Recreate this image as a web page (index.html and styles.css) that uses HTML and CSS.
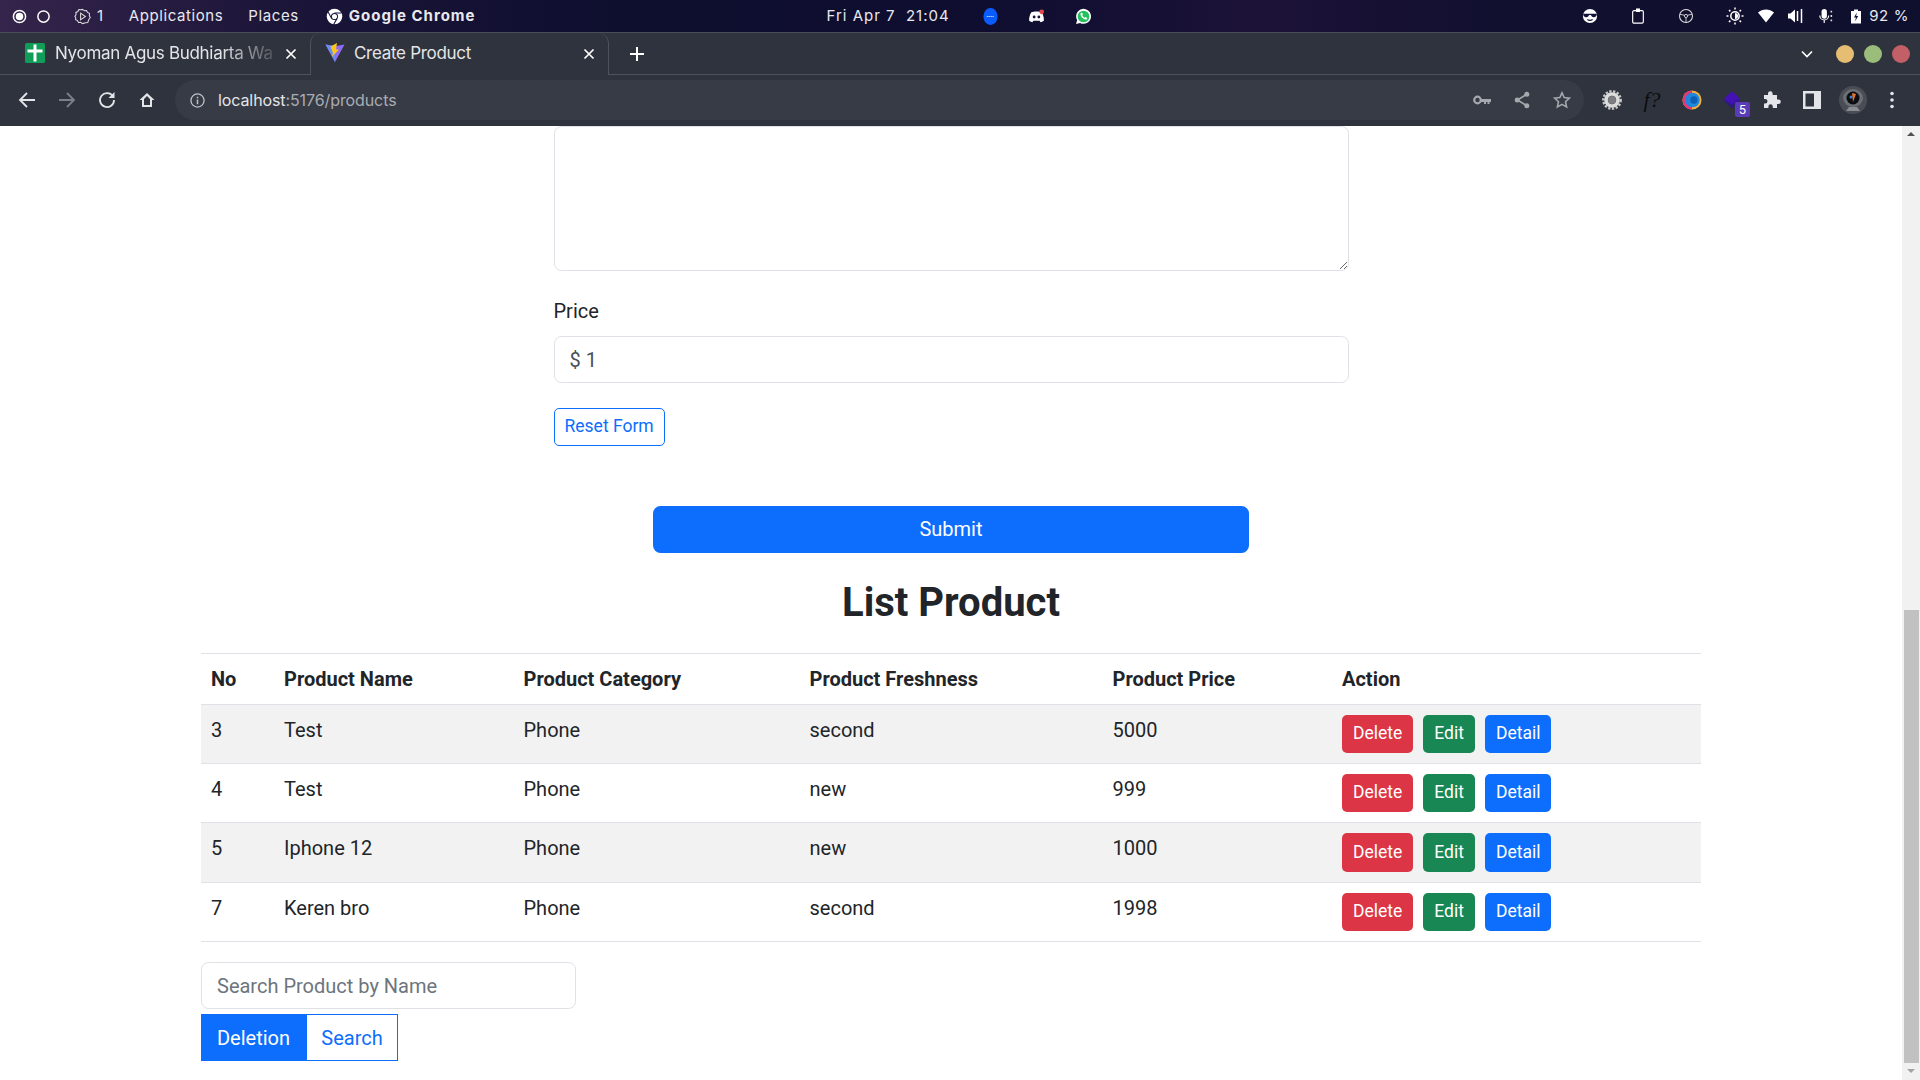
FILE: index.html
```html
<!DOCTYPE html>
<html>

<head>
    <title>Create Product</title>
    <link rel="stylesheet" href="styles.css">
</head>

<body>
    <!-- desktop panel -->
    <div class="panel">
        <svg class="p-dot" viewBox="0 0 16 16"><circle cx="8" cy="8" r="6.5" fill="none" stroke="#fff" stroke-width="1.6"/><circle cx="8" cy="8" r="4" fill="#fff"/></svg>
        <svg class="p-dot ring" viewBox="0 0 16 16"><circle cx="8" cy="8" r="6" fill="none" stroke="#fff" stroke-width="1.6"/></svg>
        <svg class="p-work" viewBox="0 0 18 18"><path d="M9 1.500l2 1.300 2.300-.2 1 2.100 2.100 1-.2 2.300 1 2-1.300 1.800-.6 1.400-.7 2.200-2.300.2L9 16.500l-2-1.300-2.300.2-1-2.100-2-1 .1-2.300L.9 9l1.300-2-.2-2.300 2.100-1 1-2.100 2.300.2z" fill="none" stroke="#ddd" stroke-width="1.100"/><path d="M7 5.500l5 3.500-5 3.500z" fill="none" stroke="#ddd" stroke-width="1.100"/></svg>
        <span class="p-num">1</span>
        <span class="p-menu first">Applications</span>
        <span class="p-menu places">Places</span>
        <svg class="p-chrome" viewBox="0 0 24 24"><circle cx="12" cy="12" r="11" fill="#fff"/><circle cx="12" cy="12" r="5" fill="#14123a"/><circle cx="12" cy="12" r="3.600" fill="#fff"/><path d="M12 7h10M8 15L3 5.500M15.500 15l-5 8.500" stroke="#14123a" stroke-width="1.500" fill="none"/></svg>
        <span class="p-app">Google Chrome</span>
        <span class="p-clock">Fri Apr 7&nbsp;&nbsp;21:04</span>
        <svg class="p-tray zoom" viewBox="0 0 16 18"><ellipse cx="8" cy="9" rx="7.500" ry="9" fill="#0b5cff"/><path d="M4 9h8" stroke="#bcd" stroke-width="1.200" stroke-dasharray="1.500 .5"/></svg>
        <svg class="p-tray discord" viewBox="0 0 18 16"><path d="M3.500 3.500C6 2.300 12 2.300 14.500 3.500 16 6 17 9 16.800 12.500c-1.300 1-2.500 1.300-3.500 1.500l-1-1.500H5.700l-1 1.500c-1-.2-2.200-.5-3.500-1.500C1 9 2 6 3.500 3.500z" fill="#fff"/><circle cx="6.500" cy="8.500" r="1.500" fill="#1a1538"/><circle cx="11.500" cy="8.500" r="1.500" fill="#1a1538"/><circle cx="14.500" cy="3" r="2.500" fill="#e5484d"/></svg>
        <svg class="p-tray whatsapp" viewBox="0 0 16 16"><path d="M1 15l1-3.700A7 7 0 1 1 4.800 14z" fill="#fff"/><circle cx="8" cy="8" r="5.500" fill="#25c15f"/><path d="M5.500 4.800c-1 1.500.5 3.700 1.700 4.700 1.200 1.100 3 2 4 1l.3-1.200-1.700-.9-.8.800c-1-.5-1.700-1.300-2.200-2.300l.7-.8-.8-1.700z" fill="#fff"/></svg>
        <div class="p-right">
            <svg class="p-ic" viewBox="0 0 18 18"><circle cx="9" cy="9" r="8" fill="#fff"/><path d="M1.500 6.500h15v1.500c-.3 1.800-2 2.700-3.500 2.400-1.500-.2-2.500-1-3-2.400H8c-.5 1.400-1.500 2.200-3 2.400-1.500.3-3.200-.6-3.500-2.400z" fill="#14123a"/><path d="M6 13c2 1.200 4 1.200 6 0" stroke="#14123a" stroke-width="1.200" fill="none"/></svg>
            <svg class="p-ic" viewBox="0 0 14 18"><rect x="1" y="3" width="12" height="14" rx="1.500" fill="none" stroke="#fff" stroke-width="1.300"/><rect x="4.800" y=".5" width="4.400" height="4" fill="#fff"/></svg>
            <svg class="p-ic" viewBox="0 0 18 18"><circle cx="9" cy="9" r="7.300" fill="none" stroke="#ddd" stroke-width="1.200"/><circle cx="9" cy="9" r="1.800" fill="none" stroke="#ddd"/><path d="M2 7l5.400 1.200M16 7l-5.400 1.200M9 11v5.500" stroke="#ddd"/></svg>
            <svg class="p-ic sun" viewBox="0 0 18 18"><circle cx="9" cy="9" r="4.200" fill="none" stroke="#fff" stroke-width="1.500"/><path d="M9 6v6a3 3 0 0 0 0-6z" fill="#fff"/><path d="M9 .5v2M9 15.500v2M.5 9h2M15.500 9h2M3 3l1.400 1.400M13.600 13.600L15 15M3 15l1.400-1.400M13.600 4.400L15 3" stroke="#fff" stroke-width="1.500"/></svg>
            <svg class="p-ic wifi" viewBox="0 0 16 14"><path d="M0 3.500C4.500-.5 11.500-.5 16 3.500L8 13.500z" fill="#fff"/></svg>
            <svg class="p-ic vol" viewBox="0 0 16 16"><path d="M0 5.500h2.500L7 1.500v13l-4.500-4H0z" fill="#fff"/><path d="M9.500 3v10M13.500 1v14" stroke="#fff" stroke-width="1.500"/></svg>
            <svg class="p-ic mic" viewBox="0 0 16 18"><rect x="3" y="1" width="6" height="11" rx="3" fill="#fff"/><path d="M1 8.500a5 5 0 0 0 10 0M6 13.500V17" stroke="#fff" stroke-width="1.300" fill="none"/><path d="M14 3v2M14 8v2M14 13v2" stroke="#ddd" stroke-width="1.800"/></svg>
            <svg class="p-ic batt" viewBox="0 0 10 14"><path d="M3 0h4v1.500h3V14H0V1.500h3z" fill="#fff"/><path d="M5.800 3L3 8h2l-1 4 3.200-5.500h-2z" fill="#14123a"/></svg>
            <span class="p-batt">92 %</span>
        </div>
    </div>

    <!-- chrome tab strip -->
    <div class="tabs">
        <div class="tab">
            <svg class="favicon" viewBox="0 0 20 20"><rect width="20" height="20" rx="1.500" fill="#0f9d58"/><path d="M8.500 1.500h3v5h6v3h-6v9h-3v-9h-6v-3h6z" fill="#fff"/></svg>
            <span class="tab-title fade">Nyoman Agus Budhiarta Wa</span>
            <svg class="tab-x" viewBox="0 0 12 12"><path d="M1.500 1.500l9 9M10.500 1.500l-9 9" stroke="#fff" stroke-width="1.700"/></svg>
        </div>
        <div class="tab active">
            <svg class="favicon" viewBox="0 0 20 20"><path d="M.5 1.500L10 3.200 19.500 1.500 10 19z" fill="#8f6cf6"/><path d="M.5 1.500L10 3.200 10 19z" fill="#6a8cf5"/><path d="M12 0L5.500 3.500 8 10 6.800 14 14 6.500 11 6.500z" fill="#ffc517"/></svg>
            <span class="tab-title">Create Product</span>
            <svg class="tab-x" viewBox="0 0 12 12"><path d="M1.500 1.500l9 9M10.500 1.500l-9 9" stroke="#fff" stroke-width="1.700"/></svg>
        </div>
        <svg class="tab-new" viewBox="0 0 16 16"><path d="M8 1v14M1 8h14" stroke="#fff" stroke-width="2"/></svg>
        <div class="tabs-right">
            <svg class="tab-list" viewBox="0 0 12 8"><path d="M1 1.500l5 5 5-5" fill="none" stroke="#fff" stroke-width="1.600"/></svg>
            <span class="win yellow"></span>
            <span class="win green"></span>
            <span class="win red"></span>
        </div>
    </div>

    <!-- chrome toolbar -->
    <div class="toolbar">
        <svg class="nav" viewBox="0 0 18 18"><path d="M17 9H2M9 2L2 9l7 7" fill="none" stroke="#e3e5e8" stroke-width="1.800"/></svg>
        <svg class="nav" viewBox="0 0 18 18"><path d="M1 9h15M9 2l7 7-7 7" fill="none" stroke="#7b7f87" stroke-width="1.800"/></svg>
        <svg class="nav" viewBox="0 0 18 18"><path d="M15 5.500A7 7 0 1 0 16 9" fill="none" stroke="#e3e5e8" stroke-width="1.800"/><path d="M16.500 1v6h-6z" fill="#e3e5e8"/></svg>
        <svg class="nav" viewBox="0 0 18 18"><path d="M9 2L1.500 9H4v7h10V9h2.500zM6 14V8l3-3 3 3v6z" fill="#e3e5e8"/></svg>
        <div class="omnibox">
            <svg class="ob-info" viewBox="0 0 16 16"><circle cx="8" cy="8" r="7" fill="none" stroke="#bfc2c7" stroke-width="1.400"/><path d="M8 7v5M8 4v1.600" stroke="#bfc2c7" stroke-width="1.600"/></svg>
            <span class="url">localhost<span class="url-rest">:5176/products</span></span>
            <svg class="ob-ic" viewBox="0 0 18 12"><circle cx="4.500" cy="6" r="3.300" fill="none" stroke="#a5a8ad" stroke-width="2.200"/><path d="M8 5h10v3h-1.500v2h-2V8h-1.500v2h-2V8H8z" fill="#a5a8ad"/></svg>
            <svg class="ob-ic" viewBox="0 0 16 18"><path d="M12.500 3.500L3.500 9l9 5.500" fill="none" stroke="#a5a8ad" stroke-width="1.600"/><circle cx="12.800" cy="3.300" r="2.500" fill="#a5a8ad"/><circle cx="3.200" cy="9" r="2.500" fill="#a5a8ad"/><circle cx="12.800" cy="14.700" r="2.500" fill="#a5a8ad"/></svg>
            <svg class="ob-ic" viewBox="0 0 18 18"><path d="M9 1.800l2.200 4.800 5.200.6-3.900 3.500 1.100 5.200L9 13.300l-4.600 2.600 1.100-5.200L1.600 7.200l5.200-.6z" fill="none" stroke="#a5a8ad" stroke-width="1.600"/></svg>
        </div>
        <svg class="ext gear" viewBox="0 0 20 20"><circle cx="10" cy="10" r="8.700" fill="none" stroke="#c9c9c9" stroke-width="2.400" stroke-dasharray="2.300 1.500"/><circle cx="10" cy="10" r="6" fill="none" stroke="#dcdcdc" stroke-width="3.600"/><circle cx="10" cy="10" r="4" fill="#7c7e82"/></svg>
        <span class="ext ffq">f?</span>
        <svg class="ext" viewBox="0 0 22 22"><circle cx="11" cy="11" r="10.500" fill="#f0b23c"/><path d="M11 .5a10.500 10.500 0 0 0 0 21z" fill="#e5357b"/><circle cx="11.500" cy="11" r="8" fill="#1f87dc"/><circle cx="13" cy="11" r="4" fill="#0e5fb6"/></svg>
        <div class="ext stack">
            <svg viewBox="0 0 22 22"><path d="M2 12l9-5 9 5-9 8z" fill="#2c1b7e"/><path d="M11 1l9 9-9 6-9-6z" fill="#4212b4"/></svg>
            <span class="badge">5</span>
        </div>
        <svg class="ext" viewBox="0 0 20 20"><path d="M2 5h4V3.500a2.300 2.300 0 0 1 4.600 0V5h4.400v4.400h1.500a2.300 2.300 0 0 1 0 4.600H15v4H10.800v-1.500a2.200 2.200 0 0 0-4.400 0V18H2v-4.500h1.200a2.300 2.300 0 0 0 0-4.600H2z" fill="#e3e5e8"/></svg>
        <svg class="ext" viewBox="0 0 20 20"><path d="M1 1h18v18H1zM3.500 3.500v13H12v-13z" fill="#e3e5e8" fill-rule="evenodd"/></svg>
        <svg class="ext avatar" viewBox="0 0 28 28"><circle cx="14" cy="14" r="14" fill="#4a4d54"/><ellipse cx="14" cy="12" rx="10" ry="9" fill="#6c6f76"/><ellipse cx="14" cy="12" rx="6.500" ry="6.500" fill="#0c0d12"/><path d="M13 7l4 1-3 8z" fill="#e2762c"/><circle cx="12" cy="11" r="1.500" fill="#3f7fd0"/><path d="M7 25l3-4h8l3 4z" fill="#8a8d94"/></svg>
        <svg class="ext kebab" viewBox="0 0 4 18"><circle cx="2" cy="2.500" r="1.800" fill="#e3e5e8"/><circle cx="2" cy="9" r="1.800" fill="#e3e5e8"/><circle cx="2" cy="15.500" r="1.800" fill="#e3e5e8"/></svg>
    </div>

    <div class="viewport">
        <div class="page">
            <div class="form">
                <textarea class="control area"></textarea>
                <label class="label">Price</label>
                <input class="control" value="$ 1">
                <button class="btn small outline reset">Reset Form</button>
            </div>
            <button class="btn primary submit">Submit</button>
            <h2 class="heading">List Product</h2>
            <table class="products">
                <colgroup>
                    <col class="c-no">
                    <col class="c-name">
                    <col class="c-cat">
                    <col class="c-fresh">
                    <col class="c-price">
                    <col class="c-action">
                </colgroup>
                <thead>
                    <tr>
                        <th>No</th>
                        <th>Product Name</th>
                        <th>Product Category</th>
                        <th>Product Freshness</th>
                        <th>Product Price</th>
                        <th>Action</th>
                    </tr>
                </thead>
                <tbody>
                    <tr>
                        <td>3</td>
                        <td>Test</td>
                        <td>Phone</td>
                        <td>second</td>
                        <td>5000</td>
                        <td>
                            <div class="actions">
                                <button class="btn small danger">Delete</button>
                                <button class="btn small success">Edit</button>
                                <button class="btn small primary">Detail</button>
                            </div>
                        </td>
                    </tr>
                    <tr>
                        <td>4</td>
                        <td>Test</td>
                        <td>Phone</td>
                        <td>new</td>
                        <td>999</td>
                        <td>
                            <div class="actions">
                                <button class="btn small danger">Delete</button>
                                <button class="btn small success">Edit</button>
                                <button class="btn small primary">Detail</button>
                            </div>
                        </td>
                    </tr>
                    <tr>
                        <td>5</td>
                        <td>Iphone 12</td>
                        <td>Phone</td>
                        <td>new</td>
                        <td>1000</td>
                        <td>
                            <div class="actions">
                                <button class="btn small danger">Delete</button>
                                <button class="btn small success">Edit</button>
                                <button class="btn small primary">Detail</button>
                            </div>
                        </td>
                    </tr>
                    <tr>
                        <td>7</td>
                        <td>Keren bro</td>
                        <td>Phone</td>
                        <td>second</td>
                        <td>1998</td>
                        <td>
                            <div class="actions">
                                <button class="btn small danger">Delete</button>
                                <button class="btn small success">Edit</button>
                                <button class="btn small primary">Detail</button>
                            </div>
                        </td>
                    </tr>
                </tbody>
            </table>
            <input class="control search" placeholder="Search Product by Name">
            <div class="switch">
                <button class="sw-btn on">Deletion</button>
                <button class="sw-btn">Search</button>
            </div>
        </div>
        <div class="scrollbar">
            <span class="arrow up"></span>
            <div class="thumb"></div>
            <span class="arrow down"></span>
        </div>
    </div>
</body>

</html>
```

FILE: styles.css
```css
* {
    box-sizing: border-box;
}

html,
body {
    margin: 0;
    height: 100%;
    overflow: hidden;
}

body {
    display: flex;
    flex-direction: column;
    font-family: Roboto, "Liberation Sans", sans-serif;
    font-size: 20px;
    line-height: 1.5;
    color: #212529;
    background: #fff;
}

svg {
    display: block;
    flex: none;
}

/* desktop panel */
.panel {
    display: flex;
    align-items: center;
    height: 32px;
    flex: none;
    padding-left: 12px;
    color: #e8e8ee;
    font-family: Inter, Roboto, sans-serif;
    font-size: 15px;
    letter-spacing: .6px;
    background: linear-gradient(90deg, #35244b 0, #1c1639 14%, #0e0e2f 32%, #0f0e30 52%, #1c1238 66%, #11102f 78%, #0f0f2e 100%);
}

.p-dot {
    width: 15px;
    height: 15px;
}

.p-dot.ring {
    margin-left: 9px;
}

.p-work {
    width: 17px;
    height: 17px;
    margin-left: 23px;
}

.p-num {
    margin-left: 6px;
}

.p-menu.first {
    margin-left: 25px;
}

.p-menu.places {
    margin-left: 25px;
}

.p-chrome {
    width: 17px;
    height: 17px;
    margin-left: 27px;
}

.p-app {
    margin-left: 6px;
    font-weight: 700;
    letter-spacing: 1px;
}

.p-clock {
    margin-left: 351px;
    letter-spacing: 1px;
    white-space: pre;
}

.p-tray {
    height: 17px;
    width: 17px;
}

.p-tray.zoom {
    margin-left: 32px;
}

.p-tray.discord {
    margin-left: 29px;
}

.p-tray.whatsapp {
    margin-left: 30px;
}

.p-right {
    display: flex;
    align-items: center;
    margin-left: auto;
    padding-right: 11px;
}

.p-ic {
    height: 16px;
    width: 16px;
    margin-right: 32px;
}

.p-ic.sun {
    height: 18px;
    width: 18px;
    margin-right: 14px;
}

.p-ic.wifi {
    margin-right: 14px;
}

.p-ic.vol {
    margin-right: 14px;
}

.p-ic.mic {
    margin-right: 17px;
}

.p-ic.batt {
    width: 10px;
    height: 15px;
    margin-right: 8px;
}

/* tab strip */
.tabs {
    display: flex;
    height: 43px;
    flex: none;
    padding-left: 6px;
    background: #2f333d;
    border-top: 1px solid #4a4d55;
    border-bottom: 1px solid #4f5259;
    color: #e4e5e8;
    font-family: Inter, Roboto, sans-serif;
    font-size: 17px;
    letter-spacing: -.3px;
}

.tab {
    display: flex;
    align-items: center;
    width: 304px;
    padding: 0 13px 0 19px;
}

.tab.active {
    width: 299px;
    margin-bottom: -1px;
    padding: 0 13px 0 14px;
    background: #2f333d;
    border: 1px solid #4f5259;
    border-bottom: 0;
    border-top: 0;
    border-radius: 10px 10px 0 0;
}

.favicon {
    width: 20px;
    height: 20px;
    margin-bottom: 2px;
}

.tab-title {
    flex: 1;
    margin-left: 10px;
    overflow: hidden;
    white-space: nowrap;
}

.tab.active .tab-title {
    margin-left: 9px;
}

.tab-title.fade {
    -webkit-mask-image: linear-gradient(90deg, #000 72%, transparent 100%);
    mask-image: linear-gradient(90deg, #000 72%, transparent 100%);
}

.tab-x {
    width: 12px;
    height: 12px;
}

.tab-new {
    width: 16px;
    height: 16px;
    align-self: center;
    margin-left: 20px;
}

.tabs-right {
    display: flex;
    align-items: center;
    gap: 10px;
    margin-left: auto;
    padding-right: 10px;
}

.tab-list {
    width: 12px;
    height: 8px;
    margin-right: 13px;
}

.win {
    width: 18px;
    height: 18px;
    border-radius: 50%;
}

.win.yellow {
    background: #e5be73;
}

.win.green {
    background: #9bbd7b;
}

.win.red {
    background: #c35f66;
}

/* toolbar */
.toolbar {
    display: flex;
    align-items: center;
    height: 51px;
    flex: none;
    padding-left: 18px;
    padding-bottom: 1px;
    background: #2f333d;
}

.nav {
    width: 18px;
    height: 18px;
    margin-right: 22px;
}

.omnibox {
    display: flex;
    align-items: center;
    width: 1409px;
    height: 40px;
    margin-left: -3px;
    padding: 0 13px 0 15px;
    background: #373b45;
    border-radius: 20px;
}

.ob-info {
    width: 15px;
    height: 15px;
}

.url {
    margin-left: 13px;
    margin-right: auto;
    color: #e4e5e8;
    font-family: Inter, Roboto, sans-serif;
    font-size: 16px;
    letter-spacing: -.1px;
}

.url-rest {
    color: #a9acb2;
}

.ob-ic {
    width: 18px;
    height: 18px;
    margin-left: 22px;
}

.ext {
    width: 20px;
    height: 20px;
    margin-right: 20px;
}

.ext.gear {
    margin-left: 18px;
}

.ffq {
    color: #0c0d10;
    font-family: "Liberation Serif", serif;
    font-size: 22px;
    font-style: italic;
    line-height: 20px;
    text-align: center;
}

.stack {
    position: relative;
}

.badge {
    position: absolute;
    left: 13px;
    top: 12px;
    width: 15px;
    height: 15px;
    background: #5b3bb8;
    border-radius: 2px;
    color: #fff;
    font-size: 13px;
    line-height: 15px;
    text-align: center;
}

.avatar {
    width: 28px;
    height: 28px;
    margin-left: -3px;
    margin-right: 23px;
}

.kebab {
    width: 4px;
    height: 18px;
    margin-right: 0;
}

/* page */
.viewport {
    display: flex;
    flex: 1;
    min-height: 0;
}

.page {
    flex: 1;
    overflow: hidden;
}

.form {
    display: flex;
    flex-direction: column;
    width: 795px;
    margin: 0 auto;
    align-items: flex-start;
}

.control {
    display: block;
    width: 100%;
    height: 47px;
    padding: 7.5px 15px;
    font-family: inherit;
    font-size: 20px;
    line-height: 30px;
    color: #495057;
    background: #fff;
    border: 1px solid #dee2e6;
    border-radius: 7.5px;
}

.control::placeholder {
    color: #6c757d;
}

.area {
    height: 145px;
}

.label {
    margin-top: 25px;
    margin-bottom: 10px;
}

.btn {
    display: block;
    font-family: inherit;
    border: 1px solid transparent;
    color: #fff;
    border-radius: 7.5px;
    font-size: 20px;
    line-height: 30px;
    padding: 7px 15px 8px;
}

.btn.small {
    height: 38px;
    font-size: 17.5px;
    line-height: 26px;
    padding: 4px 10px 6px;
    border-radius: 5px;
}

.outline {
    color: #0d6efd;
    background: #fff;
    border-color: #0d6efd;
}

.reset {
    margin-top: 25px;
}

.primary {
    background: #0d6efd;
}

.danger {
    background: #dc3545;
}

.success {
    background: #198754;
}

.submit {
    width: 596px;
    margin: 60px auto 0;
}

.heading {
    margin: 26px 0 26px;
    font-size: 40px;
    font-weight: 700;
    line-height: 48px;
    text-align: center;
}

.products {
    width: 1500px;
    margin: 0 auto;
    border-collapse: collapse;
    table-layout: fixed;
    border-top: 1px solid #dee2e6;
}

.c-no {
    width: 73px;
}

.c-name {
    width: 239.5px;
}

.c-cat {
    width: 286px;
}

.c-fresh {
    width: 303px;
}

.c-price {
    width: 229.5px;
}

.c-action {
    width: 369px;
}

.products th,
.products td {
    padding: 10px;
    text-align: left;
    vertical-align: top;
    border-bottom: 1px solid #dee2e6;
}

.products th {
    font-weight: 700;
}

.products tbody tr:nth-child(odd) {
    background: #f2f2f2;
}

/* third row comes out a pixel taller in the original */
.products tbody tr:nth-child(3) .btn {
    height: 39px;
}

.actions {
    display: flex;
    gap: 10px;
}

.search {
    width: 375px;
    margin: 20px 0 0 201px;
}

.switch {
    display: flex;
    margin: 5px 0 0 201px;
}

.sw-btn {
    width: 92px;
    height: 47px;
    padding: 0;
    font-family: inherit;
    font-size: 20px;
    color: #0d6efd;
    background: #fff;
    border: 1px solid #0d6efd;
}

.sw-btn.on {
    width: 105px;
    color: #fff;
    background: #0d6efd;
}

/* scrollbar */
.scrollbar {
    display: flex;
    flex-direction: column;
    align-items: center;
    width: 18px;
    flex: none;
    background: #f1f1f1;
}

.thumb {
    width: 15px;
    height: 453px;
    margin-top: auto;
    background: #c1c1c1;
}

.arrow {
    flex: none;
    width: 0;
    height: 0;
    border-left: 4px solid transparent;
    border-right: 4px solid transparent;
}

.arrow.up {
    margin-top: 6px;
    border-bottom: 4px solid #505050;
}

.arrow.down {
    margin-top: 6px;
    margin-bottom: 7px;
    border-top: 4px solid #a3a3a3;
}
```
